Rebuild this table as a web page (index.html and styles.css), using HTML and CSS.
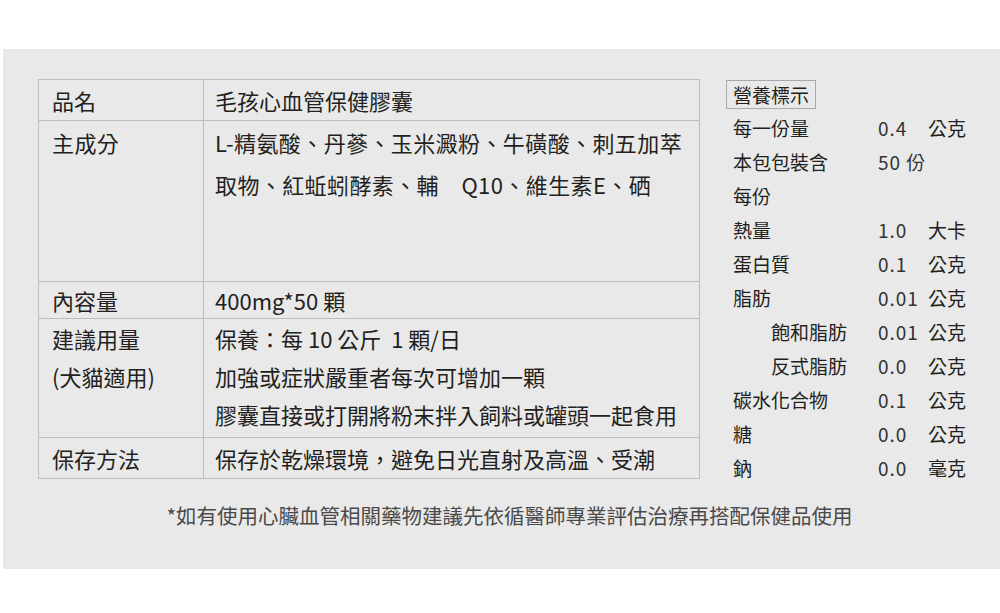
FILE: index.html
```html
<!DOCTYPE html>
<html lang="zh-Hant">
<head>
  <meta charset="UTF-8">
  <meta name="viewport" content="width=device-width, initial-scale=1.0">
  <title>毛孩心血管保健膠囊</title>
  <link rel="stylesheet" href="styles.css">
</head>
<body>
  <div class="panel">
    <div class="content">
      <table class="spec">
        <tr class="row-name">
          <td class="key">品名</td>
          <td>毛孩心血管保健膠囊</td>
        </tr>
        <tr class="row-ingredients">
          <td class="key">主成分</td>
          <td>L-精氨酸、丹蔘、玉米澱粉、牛磺酸、刺五加萃<br>取物、紅蚯蚓酵素、輔　Q10、維生素E、硒</td>
        </tr>
        <tr class="row-amount">
          <td class="key">內容量</td>
          <td>400mg*50 顆</td>
        </tr>
        <tr class="row-usage">
          <td class="key">建議用量<br>(犬貓適用)</td>
          <td>保養：每 10 公斤&nbsp; 1 顆/日<br>加強或症狀嚴重者每次可增加一顆<br>膠囊直接或打開將粉末拌入飼料或罐頭一起食用</td>
        </tr>
        <tr class="row-storage">
          <td class="key">保存方法</td>
          <td>保存於乾燥環境，避免日光直射及高溫、受潮</td>
        </tr>
      </table>

      <div class="nutrition">
        <div class="nutrition-title">營養標示</div>
        <ul class="facts">
          <li><span class="label">每一份量</span><span class="value">0.4</span><span class="unit">公克</span></li>
          <li><span class="label">本包包裝含</span><span class="value">50 份</span></li>
          <li><span class="label">每份</span></li>
          <li><span class="label">熱量</span><span class="value">1.0</span><span class="unit">大卡</span></li>
          <li><span class="label">蛋白質</span><span class="value">0.1</span><span class="unit">公克</span></li>
          <li><span class="label">脂肪</span><span class="value">0.01</span><span class="unit">公克</span></li>
          <li class="sub"><span class="label">飽和脂肪</span><span class="value">0.01</span><span class="unit">公克</span></li>
          <li class="sub"><span class="label">反式脂肪</span><span class="value">0.0</span><span class="unit">公克</span></li>
          <li><span class="label">碳水化合物</span><span class="value">0.1</span><span class="unit">公克</span></li>
          <li><span class="label">糖</span><span class="value">0.0</span><span class="unit">公克</span></li>
          <li><span class="label">鈉</span><span class="value">0.0</span><span class="unit">毫克</span></li>
        </ul>
      </div>
    </div>

    <p class="note">*如有使用心臟血管相關藥物建議先依循醫師專業評估治療再搭配保健品使用</p>
  </div>
</body>
</html>
```

FILE: styles.css
```css
body {
  margin: 0;
  background: #fff;
  font-family: "Noto Sans CJK TC", "Noto Sans", sans-serif;
  color: #231f20;
}
.panel {
  margin: 49px 0 0 3px;
  height: 520px;
  background-color: #e9e9e9;
}
.content {
  display: flex;
  align-items: flex-start;
  padding: 30px 0 0 35px;
}
.spec {
  border-collapse: collapse;
  width: 662px;
  font-size: 22px;
}
.spec td {
  border: 1px solid #bdbdbd;
  padding: 0 11px;
  line-height: 40px;
  vertical-align: top;
  box-sizing: border-box;
}
.spec td.key {
  width: 165px;
  padding-left: 13px;
}
.row-name td {
  height: 41px;
}
.row-ingredients td {
  height: 161px;
  line-height: 42px;
  letter-spacing: 0.4px;
}
.row-amount td {
  height: 37px;
  line-height: 36px;
}
.row-usage td {
  height: 119px;
  line-height: 38px;
}
.row-storage td {
  height: 40px;
}
.nutrition {
  margin-left: 26px;
  font-size: 19px;
}
.nutrition-title {
  display: inline-block;
  border: 1px solid #a9a9a9;
  padding: 0 6px;
  line-height: 27px;
  margin-top: 1px;
}
.facts {
  list-style: none;
  margin: 2px 0 0;
  padding: 0;
}
.facts li {
  display: flex;
  line-height: 34px;
  padding-left: 7px;
}
.facts .label {
  width: 145px;
}
.facts .sub .label {
  padding-left: 38px;
  width: 107px;
}
.facts .value {
  width: 50px;
  letter-spacing: 1px;
  color: #333;
}
.note {
  margin: 18px 0 0;
  text-align: center;
  font-size: 20.5px;
  line-height: 24px;
  color: #4a4a4a;
  padding-left: 16px;
}
```
